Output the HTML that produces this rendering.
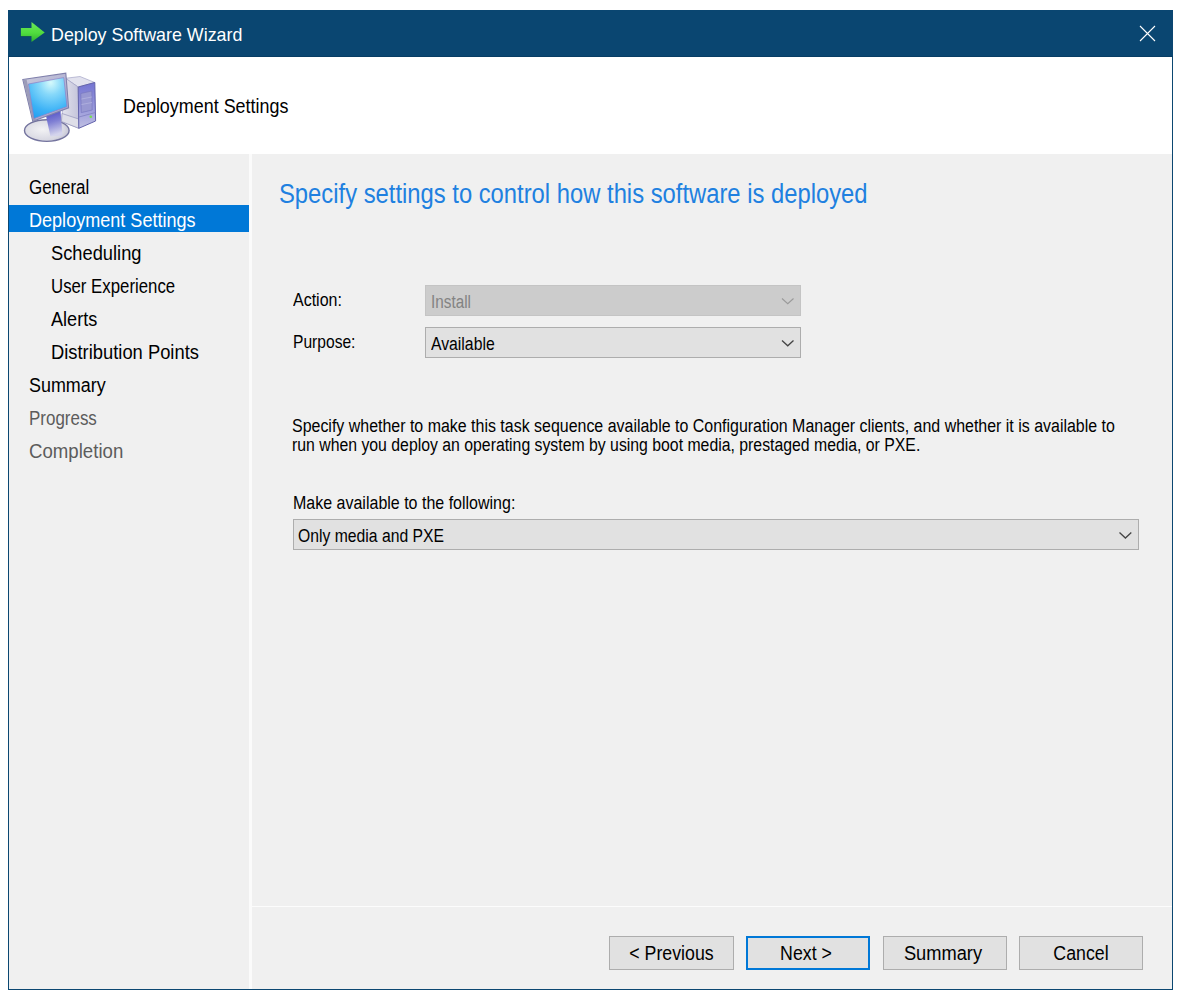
<!DOCTYPE html>
<html><head><meta charset="utf-8"><style>
html,body{margin:0;padding:0;background:#fff;width:1186px;height:1006px;overflow:hidden;}
body{font-family:"Liberation Sans",sans-serif;position:relative;}
.a{position:absolute;}
.t{position:absolute;white-space:pre;}
.r{position:absolute;box-sizing:border-box;}
</style></head><body>
<div class="r" style="left:8px;top:10px;width:1165px;height:980px;background:#0b4771"></div>
<div class="r" style="left:8px;top:10px;width:1165px;height:47px;background:#0a4671"></div>
<div class="r" style="left:8px;top:56px;width:1165px;height:1px;background:#073d64"></div>
<div class="r" style="left:9px;top:57px;width:1163px;height:97px;background:#fff"></div>
<div class="r" style="left:9px;top:154px;width:240px;height:835px;background:#f0f0f0"></div>
<div class="r" style="left:249px;top:154px;width:3px;height:835px;background:#fbfbfb"></div>
<div class="r" style="left:252px;top:154px;width:920px;height:835px;background:#f0f0f0"></div>
<svg class="a" style="left:20px;top:21px" width="26" height="23" viewBox="0 0 26 23">
  <defs><linearGradient id="ga" x1="0" y1="0" x2="0" y2="1"><stop offset="0" stop-color="#6ee858"/><stop offset="0.55" stop-color="#50dc3e"/><stop offset="1" stop-color="#2fae30"/></linearGradient></defs>
  <path d="M0.9 7 H11.5 V0.9 L24.7 11.5 L11.5 21 V15.2 H0.9 Z" fill="url(#ga)"/><path d="M0.5 15.6 H11.2" stroke="#0a3a40" stroke-width="0.8" opacity="0.5"/>
</svg>
<div class="t" style="left:51px;top:24.00px;font-size:17.75px;line-height:22px;color:#fff;transform:scale(1.005,1.0);transform-origin:0 17.15px;">Deploy Software Wizard</div>
<svg class="a" style="left:1139px;top:25px" width="17" height="17" viewBox="0 0 17 17"><path d="M1 1 L16 16 M16 1 L1 16" stroke="#fff" stroke-width="1.1"/></svg>
<!-- computer icon -->
<svg class="a" style="left:0;top:0" width="110" height="150" viewBox="0 0 110 150">
  <defs>
    <radialGradient id="gbase" cx="0.4" cy="0.45" r="0.7"><stop offset="0" stop-color="#f2f2f4"/><stop offset="0.7" stop-color="#d8d8e2"/><stop offset="1" stop-color="#b4b4c8"/></radialGradient>
    <linearGradient id="gneck" x1="0" y1="0" x2="0.2" y2="1"><stop offset="0" stop-color="#4848c4"/><stop offset="0.5" stop-color="#8080d4"/><stop offset="1" stop-color="#d4d4ec"/></linearGradient>
    <radialGradient id="gscreen" cx="0.58" cy="0.12" r="1.0"><stop offset="0" stop-color="#d6fafc"/><stop offset="0.3" stop-color="#86d8fa"/><stop offset="0.7" stop-color="#3cb2f6"/><stop offset="1" stop-color="#1e9cf0"/></radialGradient>
    <linearGradient id="gfront" x1="0" y1="0" x2="0" y2="1"><stop offset="0" stop-color="#7474d2"/><stop offset="0.6" stop-color="#9c9cdc"/><stop offset="1" stop-color="#c0c0e2"/></linearGradient>
    <linearGradient id="gside" x1="0" y1="0" x2="1" y2="0"><stop offset="0" stop-color="#e4e4ee"/><stop offset="1" stop-color="#c4c4da"/></linearGradient>
    <linearGradient id="gframe" x1="0" y1="0" x2="1" y2="1"><stop offset="0" stop-color="#cacadc"/><stop offset="1" stop-color="#a4a4cc"/></linearGradient>
  </defs>
  <ellipse cx="46.8" cy="130.6" rx="22.3" ry="10.8" fill="url(#gbase)" stroke="#74749e" stroke-width="1.4"/>
  <path d="M46 116 L60.5 110.5 L62.5 135.5 L50.5 136.5 Z" fill="url(#gneck)"/>
  <path d="M65.5 78.3 L80 76.5 L94.8 82.5 L78.2 87 Z" fill="#e2e2ee" stroke="#9898c0" stroke-width="0.6"/>
  <path d="M65.5 78.3 L78.2 87 L78.8 128.3 L61.5 121.5 Z" fill="url(#gside)" stroke="#9898c0" stroke-width="0.6"/>
  <path d="M62 113.5 L78.6 119 L78.8 128.3 L61.5 121.5 Z" fill="#dedee8" stroke="#8a8ab4" stroke-width="0.6"/>
  <path d="M78.2 87 L94.8 82.5 L95.6 121 L78.8 128.3 Z" fill="url(#gfront)" stroke="#6464ac" stroke-width="1"/>
  <path d="M80.8 93.5 L91.8 91 L92.2 110 L81.3 112.6 Z" fill="#9898d2" stroke="#7474bc" stroke-width="0.6"/>
  <path d="M81.5 99 L91.8 97 M81.5 104.5 L92 102.5" stroke="#b4b4e0" stroke-width="0.8"/>
  <path d="M79 117 L95.3 112.5" stroke="#8080c0" stroke-width="0.8"/>
  <circle cx="90.8" cy="116.8" r="1.3" fill="#74e04c"/>
  <path d="M22.8 79.5 L65.8 73.2 L68.6 107.8 L32.8 121.2 Z" fill="url(#gframe)" stroke="#8080ac" stroke-width="1.1"/>
  <path d="M23.2 80 L26.5 79.3 L35.8 120 L33 121 Z" fill="#9c9cb8"/>
  <path d="M28.4 84 L63.8 77.6 L67 106.6 L34 118.6 Z" fill="url(#gscreen)" stroke="#8c80c8" stroke-width="0.7"/>
</svg>
<div class="t" style="left:123px;top:96.00px;font-size:17.75px;line-height:22px;color:#000;transform:scale(1.01,1.11);transform-origin:0 17.15px;">Deployment Settings</div>
<div class="r" style="left:9px;top:205px;width:240px;height:27px;background:#0078d7"></div>
<div class="t" style="left:29px;top:177.00px;font-size:17.75px;line-height:22px;color:#000;transform:scale(0.955,1.11);transform-origin:0 17.15px;">General</div>
<div class="t" style="left:29px;top:210.00px;font-size:17.75px;line-height:22px;color:#fff;transform:scale(1.017,1.11);transform-origin:0 17.15px;">Deployment Settings</div>
<div class="t" style="left:51px;top:243.00px;font-size:17.75px;line-height:22px;color:#000;transform:scale(1.03,1.11);transform-origin:0 17.15px;">Scheduling</div>
<div class="t" style="left:51px;top:276.00px;font-size:17.75px;line-height:22px;color:#000;transform:scale(0.946,1.11);transform-origin:0 17.15px;">User Experience</div>
<div class="t" style="left:51px;top:309.00px;font-size:17.75px;line-height:22px;color:#000;transform:scale(1.02,1.11);transform-origin:0 17.15px;">Alerts</div>
<div class="t" style="left:51px;top:342.00px;font-size:17.75px;line-height:22px;color:#000;transform:scale(1.034,1.11);transform-origin:0 17.15px;">Distribution Points</div>
<div class="t" style="left:29px;top:375.00px;font-size:17.75px;line-height:22px;color:#000;transform:scale(1.01,1.11);transform-origin:0 17.15px;">Summary</div>
<div class="t" style="left:29px;top:408.00px;font-size:17.75px;line-height:22px;color:#5c5c5c;transform:scale(0.955,1.11);transform-origin:0 17.15px;">Progress</div>
<div class="t" style="left:29px;top:441.00px;font-size:17.75px;line-height:22px;color:#5c5c5c;transform:scale(1.05,1.11);transform-origin:0 17.15px;">Completion</div>
<div class="t" style="left:279px;top:180.34px;font-size:23.85px;line-height:30px;color:#2080e0;transform:scale(0.998,1.13);transform-origin:0 23.26px;">Specify settings to control how this software is deployed</div>
<div class="t" style="left:293px;top:290.61px;font-size:16px;line-height:20px;color:#000;transform:scale(1.0,1.14);transform-origin:0 15.54px;">Action:</div>
<div class="r" style="left:425px;top:285px;width:376px;height:31px;background:#cccccc;border:1px solid #c4c4c4"></div>
<div class="t" style="left:431px;top:292.61px;font-size:16px;line-height:20px;color:#838383;transform:scale(0.955,1.14);transform-origin:0 15.54px;">Install</div>
<svg class="a" style="left:0;top:0" width="1186" height="1006" viewBox="0 0 1186 1006"><path d="M782 298.5 L787.75 303.7 L793.5 298.5" fill="none" stroke="#9a9a9a" stroke-width="1.1"/></svg>
<div class="t" style="left:293px;top:332.61px;font-size:16px;line-height:20px;color:#000;transform:scale(0.975,1.14);transform-origin:0 15.54px;">Purpose:</div>
<div class="r" style="left:425px;top:327px;width:376px;height:31px;background:#e1e1e1;border:1px solid #adadad"></div>
<div class="t" style="left:431px;top:334.61px;font-size:16px;line-height:20px;color:#000;transform:scale(0.985,1.14);transform-origin:0 15.54px;">Available</div>
<svg class="a" style="left:0;top:0" width="1186" height="1006" viewBox="0 0 1186 1006"><path d="M782 340.5 L787.75 345.8 L793.5 340.5" fill="none" stroke="#444" stroke-width="1.3"/></svg>
<div class="t" style="left:292px;top:416.61px;font-size:16px;line-height:20px;color:#000;transform:scale(0.997,1.1);transform-origin:0 15.54px;">Specify whether to make this task sequence available to Configuration Manager clients, and whether it is available to</div>
<div class="t" style="left:292px;top:435.61px;font-size:16px;line-height:20px;color:#000;transform:scale(0.988,1.1);transform-origin:0 15.54px;">run when you deploy an operating system by using boot media, prestaged media, or PXE.</div>
<div class="t" style="left:293px;top:493.61px;font-size:16px;line-height:20px;color:#000;transform:scale(1.0,1.14);transform-origin:0 15.54px;">Make available to the following:</div>
<div class="r" style="left:293px;top:519px;width:846px;height:31px;background:#e1e1e1;border:1px solid #adadad"></div>
<div class="t" style="left:298px;top:526.61px;font-size:16px;line-height:20px;color:#000;transform:scale(0.983,1.14);transform-origin:0 15.54px;">Only media and PXE</div>
<svg class="a" style="left:0;top:0" width="1186" height="1006" viewBox="0 0 1186 1006"><path d="M1119.5 532.5 L1125.4 538.0 L1131.3 532.5" fill="none" stroke="#444" stroke-width="1.3"/></svg>
<div class="r" style="left:252px;top:906px;width:920px;height:1px;background:#fcfcfc"></div>
<div class="r" style="left:609px;top:936px;width:125px;height:34px;background:#e1e1e1;border:1px solid #adadad"></div>
<div class="t" style="left:609px;top:943.00px;width:125px;text-align:center;font-size:17.75px;line-height:22px;color:#000;transform:scale(1.0,1.11);transform-origin:50% 17.15px">&lt; Previous</div>
<div class="r" style="left:746px;top:936px;width:124px;height:34px;background:#e1e1e1;border:2px solid #0078d7"></div>
<div class="t" style="left:744px;top:943.00px;width:124px;text-align:center;font-size:17.75px;line-height:22px;color:#000;transform:scale(1.0,1.11);transform-origin:50% 17.15px">Next &gt;</div>
<div class="r" style="left:883px;top:936px;width:124px;height:34px;background:#e1e1e1;border:1px solid #adadad"></div>
<div class="t" style="left:881px;top:943.00px;width:124px;text-align:center;font-size:17.75px;line-height:22px;color:#000;transform:scale(1.03,1.11);transform-origin:50% 17.15px">Summary</div>
<div class="r" style="left:1019px;top:936px;width:124px;height:34px;background:#e1e1e1;border:1px solid #adadad"></div>
<div class="t" style="left:1019px;top:943.00px;width:124px;text-align:center;font-size:17.75px;line-height:22px;color:#000;transform:scale(1.0,1.11);transform-origin:50% 17.15px">Cancel</div>
</body></html>
